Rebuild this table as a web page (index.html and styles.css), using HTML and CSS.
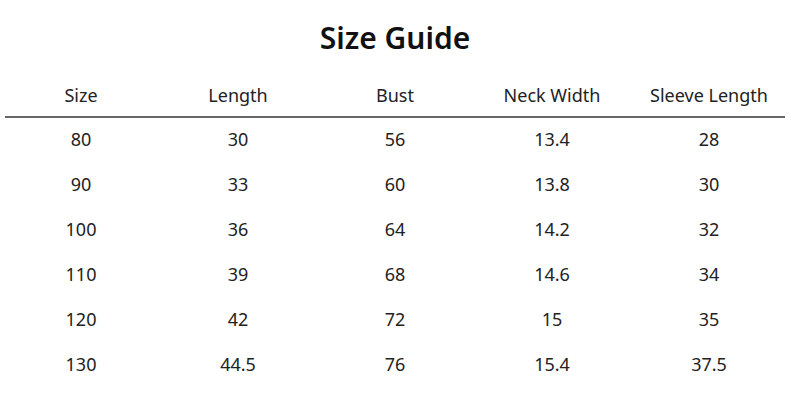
FILE: index.html
```html
<!DOCTYPE html>
<html>
<head>
<meta charset="utf-8">
<link rel="stylesheet" href="styles.css">
</head>
<body>
<div class="page">
  <h1 class="title">Size Guide</h1>
  <div class="table">
    <div class="row head">
      <div>Size</div><div>Length</div><div>Bust</div><div>Neck Width</div><div>Sleeve Length</div>
    </div>
    <div class="rule"></div>
    <div class="row"><div>80</div><div>30</div><div>56</div><div>13.4</div><div>28</div></div>
    <div class="row"><div>90</div><div>33</div><div>60</div><div>13.8</div><div>30</div></div>
    <div class="row"><div>100</div><div>36</div><div>64</div><div>14.2</div><div>32</div></div>
    <div class="row"><div>110</div><div>39</div><div>68</div><div>14.6</div><div>34</div></div>
    <div class="row"><div>120</div><div>42</div><div>72</div><div>15</div><div>35</div></div>
    <div class="row"><div>130</div><div>44.5</div><div>76</div><div>15.4</div><div>37.5</div></div>
  </div>
</div>
</body>
</html>
```
FILE: styles.css
```css
html, body {
  margin: 0;
  padding: 0;
  background: #fff;
}
.page {
  width: 790px;
  height: 400px;
  font-family: "Noto Sans", "Open Sans", sans-serif;
  color: #222;
}
.title {
  margin: 0;
  padding-top: 18px;
  height: 40px;
  line-height: 40px;
  text-align: center;
  font-size: 30px;
  font-weight: 600;
  color: #111;
}
.table {
  width: 785px;
  margin: 16px auto 0;
}
.row {
  display: grid;
  grid-template-columns: repeat(5, 1fr);
  height: 45px;
  line-height: 43px;
  font-size: 18px;
  text-align: center;
}
.row.head {
  height: 42px;
  line-height: 42px;
}
.rule {
  height: 2px;
  margin: 0 2.5px;
  background: #666;
}
```
